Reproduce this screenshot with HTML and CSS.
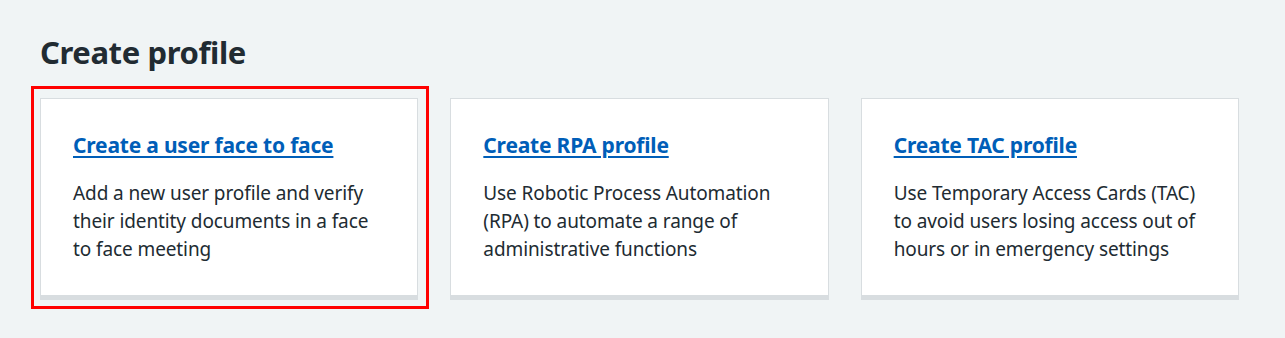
FILE: index.html
```html
<!DOCTYPE html>
<html lang="en">
<head>
<meta charset="utf-8">
<title>Create profile</title>
<link rel="stylesheet" href="styles.css">
</head>
<body>
<main class="page">
  <h1 class="title">Create profile</h1>
  <div class="cards">
    <div class="card card--selected">
      <h2 class="card-heading"><a href="#" class="card-link">Create a user face to face</a></h2>
      <p class="card-text">Add a new user profile and verify their identity documents in a face to face meeting</p>
    </div>
    <div class="card">
      <h2 class="card-heading"><a href="#" class="card-link">Create RPA profile</a></h2>
      <p class="card-text">Use Robotic Process Automation (RPA) to automate a range of administrative functions</p>
    </div>
    <div class="card">
      <h2 class="card-heading"><a href="#" class="card-link">Create TAC profile</a></h2>
      <p class="card-text">Use Temporary Access Cards (TAC) to avoid users losing access out of hours or in emergency settings</p>
    </div>
  </div>
</main>
</body>
</html>
```
FILE: styles.css
```css
html, body {
  margin: 0;
  padding: 0;
  background: #f0f4f5;
}
body {
  font-family: "Noto Sans", "Open Sans", sans-serif;
  color: #212b32;
}
.page {
  padding: 31px 46px 40px 40px;
}
.title {
  margin: 0 0 25px;
  font-size: 31px;
  line-height: 42px;
  font-weight: 700;
  letter-spacing: -0.4px;
  color: #212b32;
}
.cards {
  display: grid;
  grid-template-columns: repeat(3, 1fr);
  gap: 32px;
}
.card {
  position: relative;
  background: #fff;
  border: 1px solid #d8dde0;
  box-shadow: 0 4px 0 #d8dde0;
  padding: 32px 32px 32px;
  min-height: 130px;
}
.card--selected::after {
  content: "";
  position: absolute;
  top: -13px;
  left: -10px;
  right: -12px;
  bottom: -14px;
  border: 3px solid #ff0000;
  pointer-events: none;
}
.card-heading {
  margin: 0 0 20px;
  font-size: 21px;
  line-height: 28px;
  font-weight: 700;
  letter-spacing: -0.2px;
}
.card-link {
  color: #005eb8;
  text-decoration: underline;
  text-decoration-thickness: 2px;
  text-underline-offset: 3px;
}
.card-text {
  margin: 0;
  font-size: 19px;
  line-height: 28px;
  letter-spacing: -0.1px;
  color: #212b32;
}
```
